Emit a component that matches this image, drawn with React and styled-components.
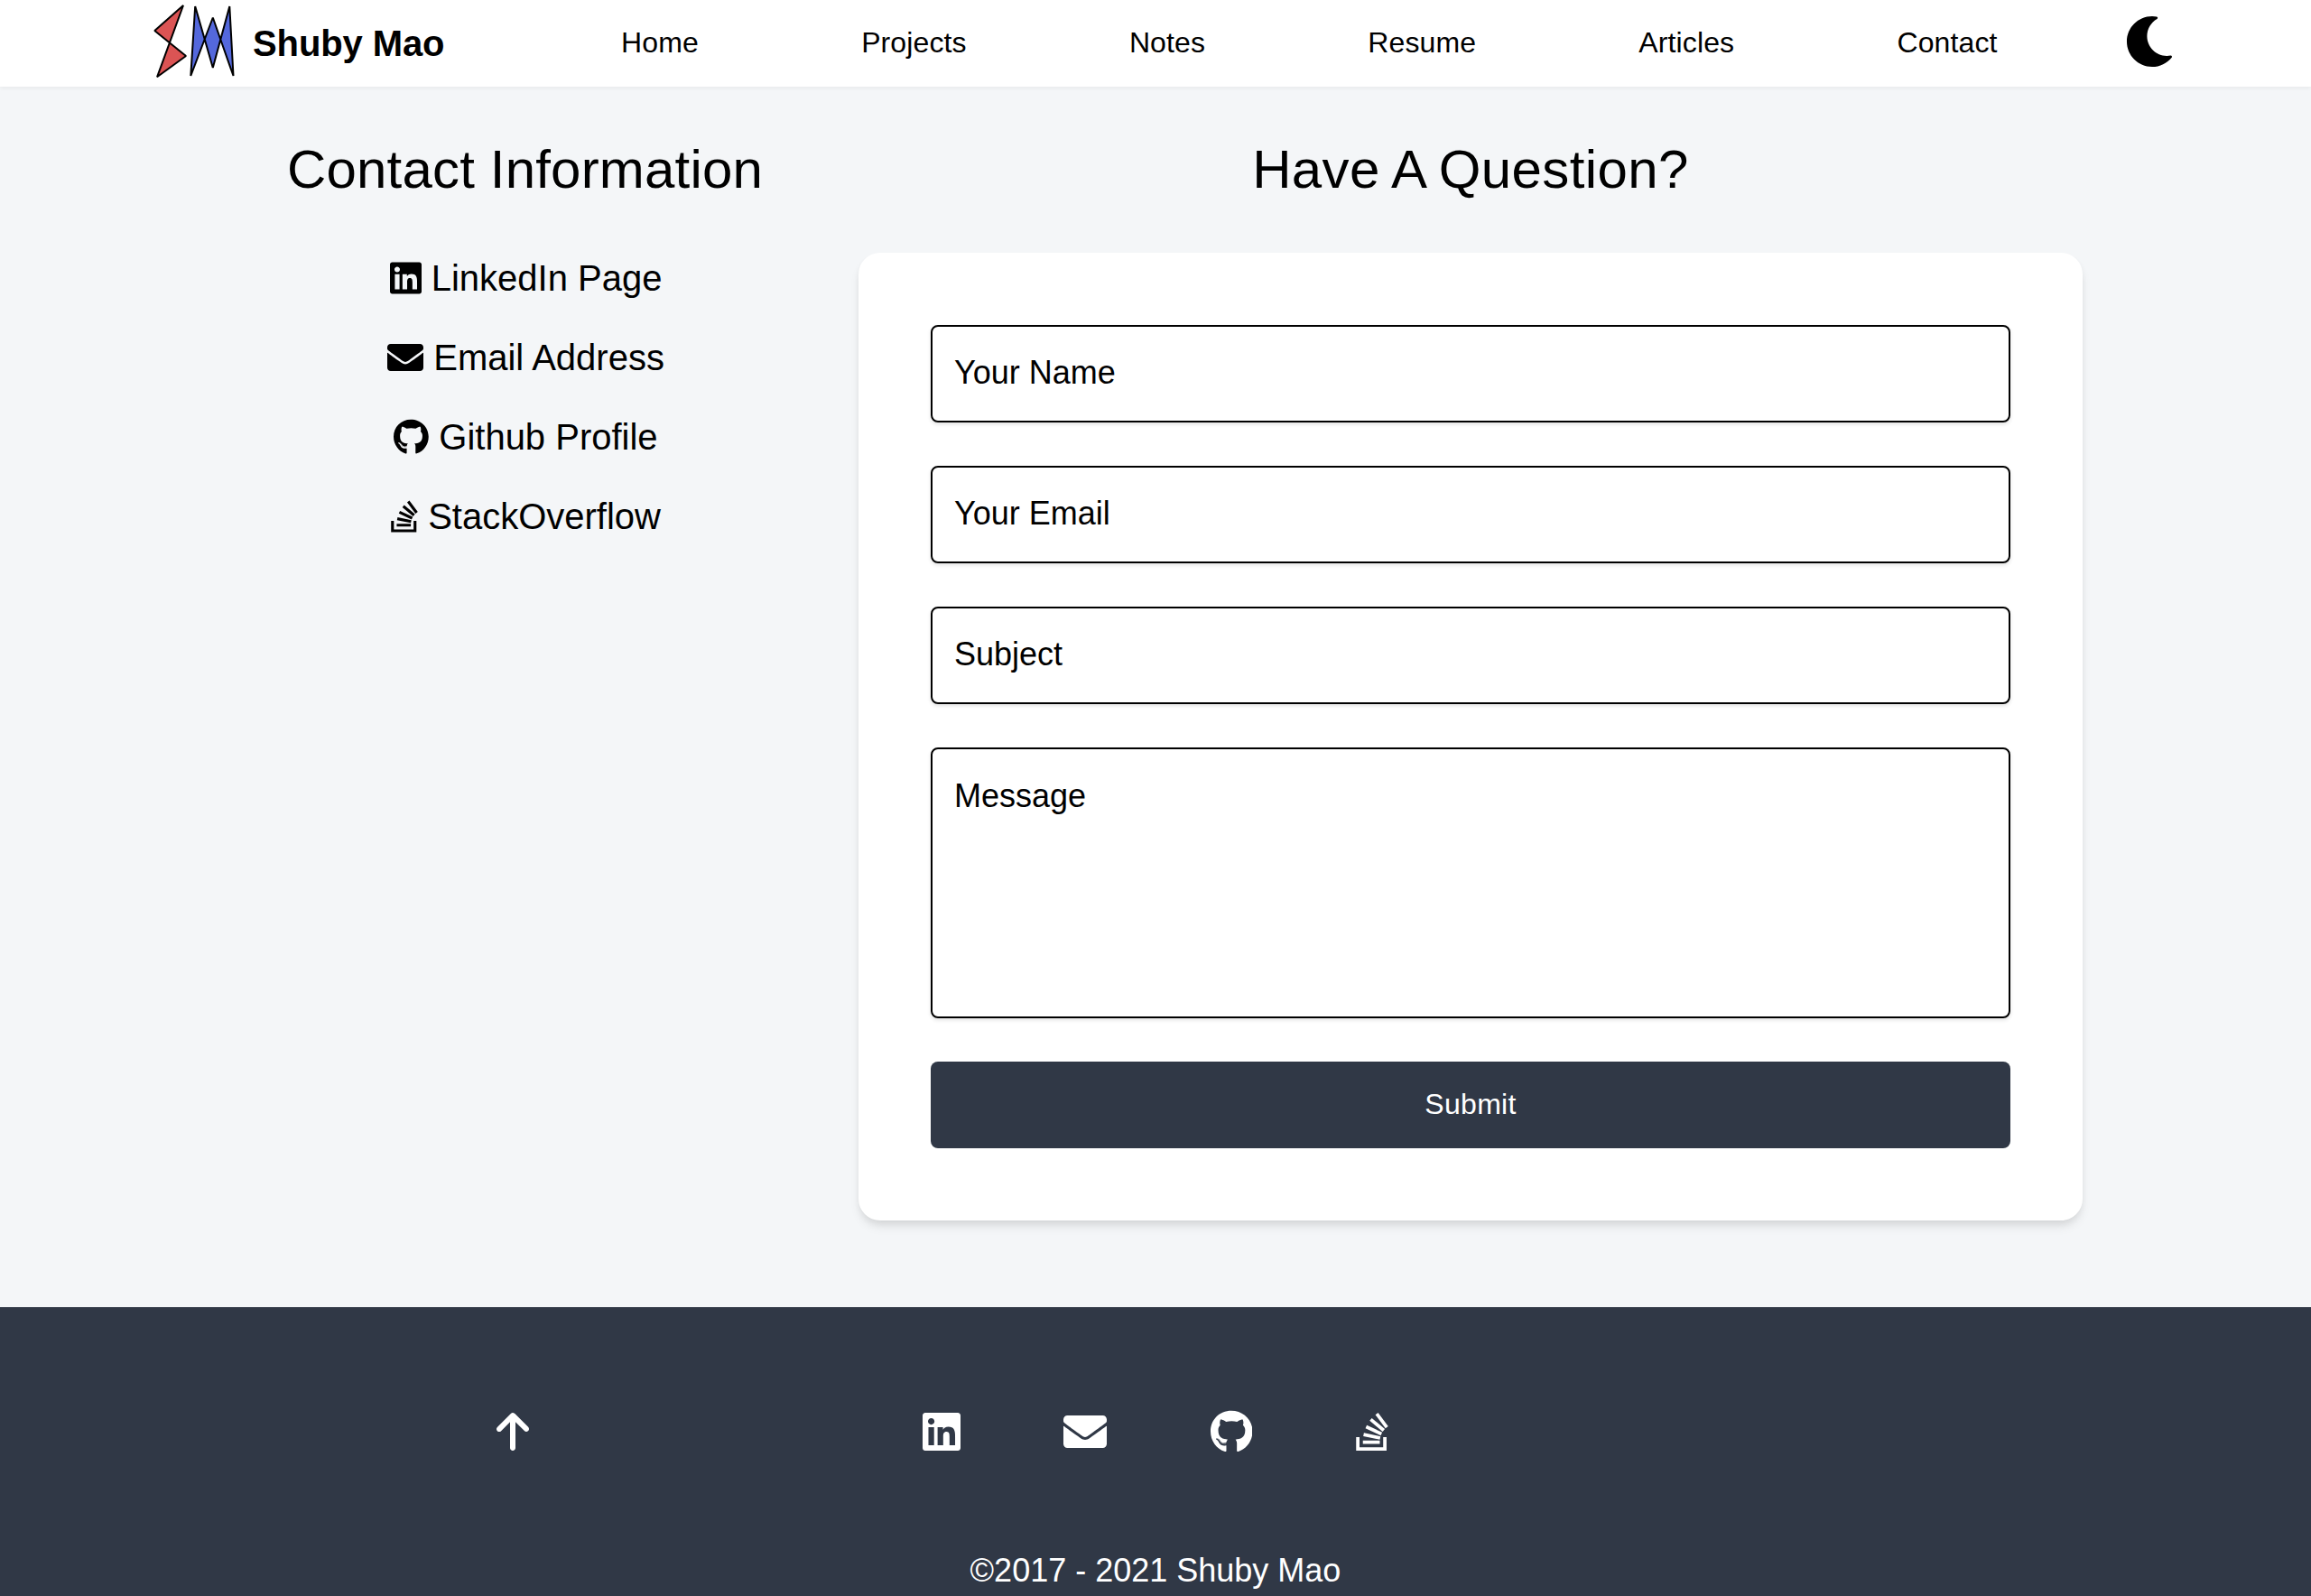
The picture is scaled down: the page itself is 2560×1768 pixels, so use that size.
import React from "react";
import styled, { createGlobalStyle } from "styled-components";
import { FaLinkedin, FaEnvelope, FaGithub, FaStackOverflow, FaMoon } from "react-icons/fa";
import { FaArrowUp } from "react-icons/fa6";

const GlobalStyle = createGlobalStyle`
  *, *::before, *::after { box-sizing: border-box; }
  body {
    margin: 0;
    background: #f4f6f8;
    color: #000;
    font-family: "Liberation Sans", Arial, sans-serif;
    overflow: hidden;
  }
`;

const Page = styled.div`
  display: flex;
  flex-direction: column;
  height: 1768px;
  overflow: hidden;
`;

const NavBar = styled.header`
  display: flex;
  align-items: center;
  flex: none;
  height: 96px;
  padding-left: 168px;
  background: #fff;
  box-shadow: 0 2px 4px rgba(0, 0, 0, 0.05);
`;

const Brand = styled.a`
  display: flex;
  align-items: center;
  width: 430px;
  font-size: 40px;
  font-weight: 700;
  line-height: 60px;
  letter-spacing: -0.1px;
  white-space: nowrap;
`;

const Logo = styled.svg`
  width: 96px;
  height: 96px;
  margin-right: 16px;
`;

const NavLinks = styled.nav`
  display: flex;
  flex: none;
  margin-bottom: 2px;
`;

const NavLink = styled.a`
  padding: 0 90.1px;
  font-size: 32px;
  line-height: 48px;
  letter-spacing: 0.12px;
`;

const ThemeToggle = styled.button`
  display: flex;
  margin: 0 0 4px 50.7px;
  padding: 0;
  border: 0;
  background: none;
  color: #000;
  font-size: 56px;
`;

const Main = styled.main`
  display: flex;
  flex: none;
  height: 1352px;
  padding: 48px 253px 0 252px;
`;

const Info = styled.section`
  width: 659px;
  text-align: center;
`;

const Title = styled.h1`
  margin: 0;
  font-size: 60px;
  font-weight: 400;
  line-height: 88px;
  letter-spacing: ${(p) => p.$tracking}px;
  word-spacing: ${(p) => p.$wordGap || 0}px;
  text-align: center;
`;

const ContactList = styled.ul`
  display: flex;
  flex-direction: column;
  align-items: center;
  gap: 28px;
  margin: 46px 0 0;
  padding: 0 0 0 2px;
  list-style: none;
`;

const ContactItem = styled.li`
  height: 60px;
  font-size: 40px;
  line-height: 60px;
  white-space: pre;
`;

const Glyph = styled.span`
  display: inline-flex;
  width: ${(p) => p.$ratio * p.$size}px;
  height: ${(p) => p.$size}px;
  vertical-align: -6px;

  svg {
    width: 100%;
    height: 100%;
  }
`;

const Question = styled.section`
  width: 1356px;
  margin-left: 40px;
`;

const Card = styled.form`
  display: flex;
  flex-direction: column;
  gap: 48px;
  height: 1072px;
  margin-top: 48px;
  padding: 80px;
  border-radius: 24px;
  background: #fff;
  box-shadow: 0 8px 12px -2px rgba(0, 0, 0, 0.1), 0 4px 8px -2px rgba(0, 0, 0, 0.06);
`;

const Field = styled.div`
  height: ${(p) => p.$height}px;
  padding: ${(p) => (p.$multiline ? 24 : 23)}px 24px;
  border: 2px solid #000;
  border-radius: 8px;
  font-size: 36px;
  line-height: 56px;
  box-shadow: 0 2px 4px rgba(0, 0, 0, 0.12);
`;

const Submit = styled.button`
  height: 96px;
  padding: 0 0 2px;
  border: 0;
  border-radius: 8px;
  background: #303846;
  color: #fff;
  font-family: inherit;
  font-size: 32px;
  line-height: 48px;
  letter-spacing: 0.3px;
`;

const Footer = styled.footer`
  display: flex;
  flex-direction: column;
  flex: none;
  height: 320px;
  padding-top: 114px;
  background: #303846;
  color: #fff;
`;

const FooterRow = styled.div`
  display: flex;
  align-items: center;
  height: 48px;
  padding-left: 550px;
`;

const Social = styled.div`
  display: flex;
  align-items: center;
  gap: 114.4px;
  margin-left: 436px;
`;

const Copyright = styled.p`
  margin: 102px 0 0;
  font-size: 36px;
  line-height: 56px;
  text-align: center;
`;

const links = ["Home", "Projects", "Notes", "Resume", "Articles", "Contact"];

const contacts = [
  { label: "LinkedIn Page", Icon: FaLinkedin, ratio: 0.875 },
  { label: "Email Address", Icon: FaEnvelope, ratio: 1 },
  { label: "Github Profile", Icon: FaGithub, ratio: 0.96875 },
  { label: "StackOverflow", Icon: FaStackOverflow, ratio: 0.75 },
];

const fields = [
  { label: "Your Name", height: 108 },
  { label: "Your Email", height: 108 },
  { label: "Subject", height: 108 },
  { label: "Message", height: 300, multiline: true },
];

function SMLogo() {
  return (
    <Logo viewBox="168 0 96 96" stroke="#000" strokeWidth="2" strokeLinejoin="bevel">
      <path fill="#db5454" d="M203 6 171.3 34 206 62 174 85.3Z" />
      <path fill="#5468dc" d="M216.2 7 235.8 75 254.3 7 258.5 84 235.8 19.5 211.3 84Z" />
    </Logo>
  );
}

export default function App() {
  return (
    <>
      <GlobalStyle />
      <Page>
        <NavBar>
          <Brand>
            <SMLogo />
            Shuby Mao
          </Brand>
          <NavLinks>
            {links.map((label) => (
              <NavLink key={label}>{label}</NavLink>
            ))}
          </NavLinks>
          <ThemeToggle aria-label="Toggle theme">
            <FaMoon />
          </ThemeToggle>
        </NavBar>
        <Main>
          <Info>
            <Title $tracking={0.18}>Contact Information</Title>
            <ContactList>
              {contacts.map(({ label, Icon, ratio }) => (
                <ContactItem key={label}>
                  <Glyph $ratio={ratio} $size={40}>
                    <Icon />
                  </Glyph>{" "}
                  {label}
                </ContactItem>
              ))}
            </ContactList>
          </Info>
          <Question>
            <Title $tracking={0.4} $wordGap={-1.5}>
              Have A Question?
            </Title>
            <Card>
              {fields.map(({ label, height, multiline }) => (
                <Field key={label} $height={height} $multiline={multiline}>
                  {label}
                </Field>
              ))}
              <Submit type="button">Submit</Submit>
            </Card>
          </Question>
        </Main>
        <Footer>
          <FooterRow>
            <Glyph $ratio={0.75} $size={48}>
              <FaArrowUp />
            </Glyph>
            <Social>
              {contacts.map(({ label, Icon, ratio }) => (
                <Glyph key={label} $ratio={ratio} $size={48}>
                  <Icon />
                </Glyph>
              ))}
            </Social>
          </FooterRow>
          <Copyright>©2017 - 2021 Shuby Mao</Copyright>
        </Footer>
      </Page>
    </>
  );
}
